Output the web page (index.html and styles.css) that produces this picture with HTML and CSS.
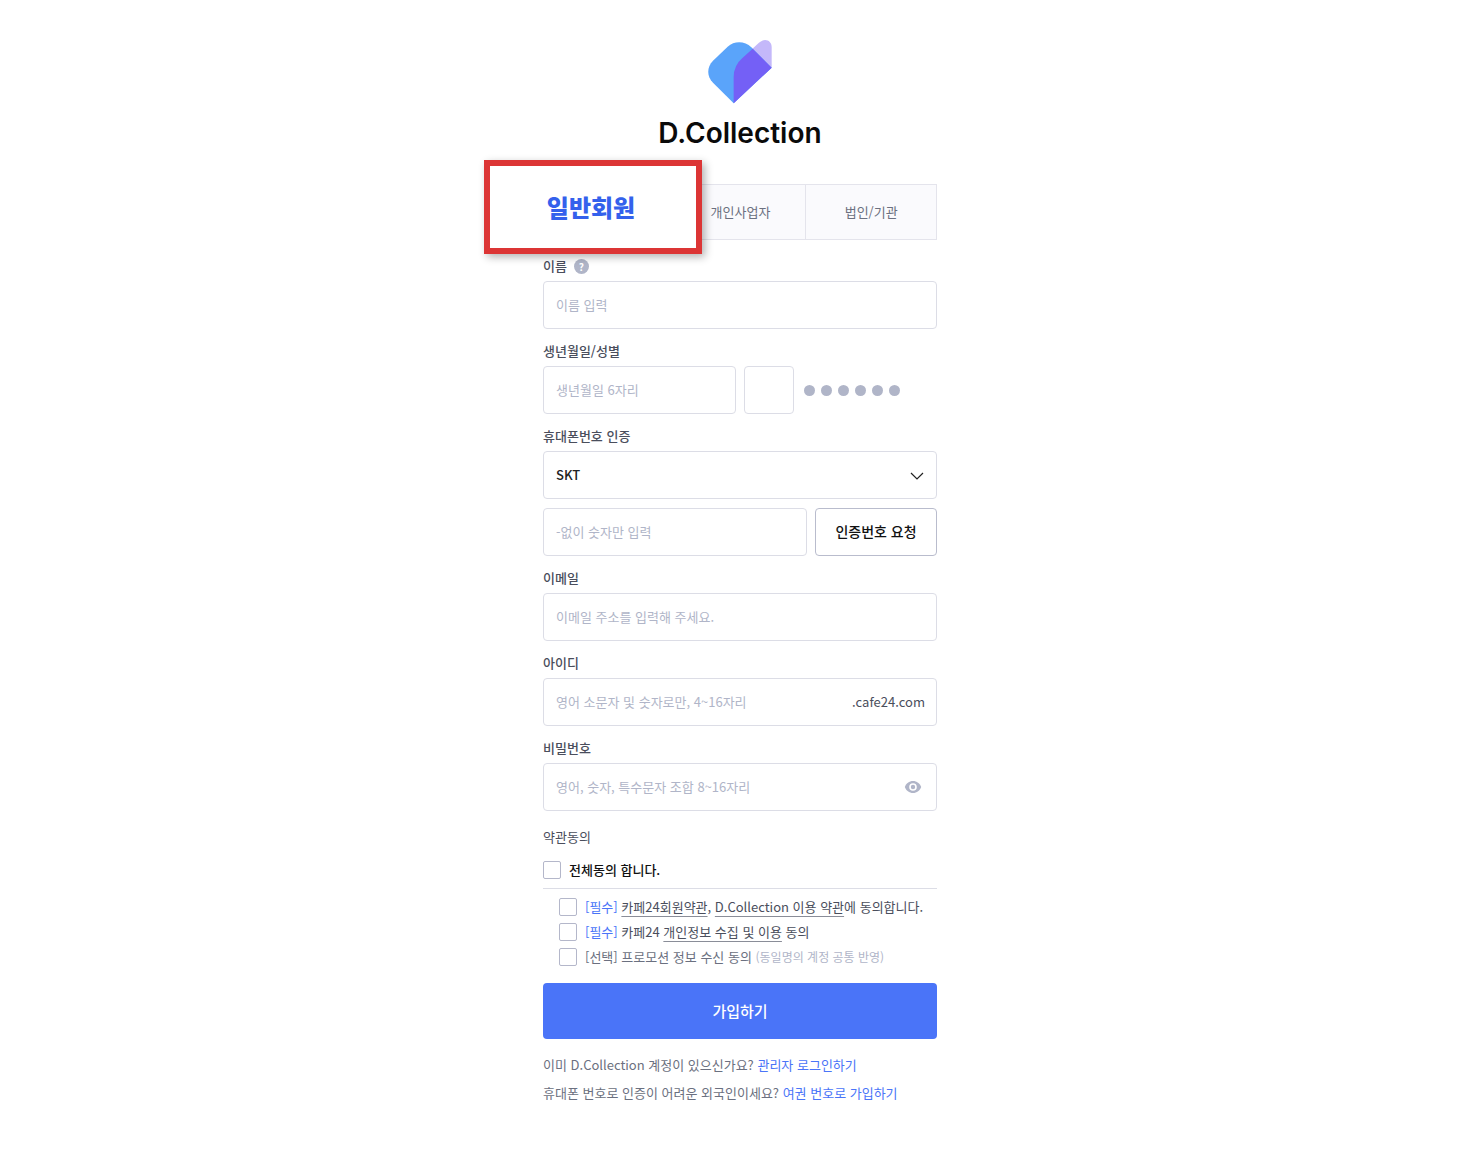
FILE: index.html
```html
<!DOCTYPE html>
<html lang="ko">
<head>
<meta charset="UTF-8">
<meta name="viewport" content="width=device-width, initial-scale=1.0">
<title>D.Collection 회원가입</title>
<link rel="stylesheet" href="styles.css">
</head>
<body>
    <main class="container">
        <h1 class="logo">
            <svg class="logo-mark" width="64" height="64" viewBox="204 29 192 192" aria-hidden="true">
                <path fill="#c4b8fa" d="M281 219V140Q281 105 308 82L356 38C374 21 395 31 395 50V112Z"/>
                <path fill="#5aa4fa" d="M281 219L219 157C200 138 200 110 219 91L263 49C283 31 314 31 334 51L395 112Z"/>
                <path fill="#7460f6" d="M281 219V140Q281 105 308 82L338 55L395 112Z"/>
            </svg>
            <span>D.Collection</span>
        </h1>

        <div class="tabs">
            <button type="button" class="tab active"><span class="callout">일반회원</span></button>
            <button type="button" class="tab">개인사업자</button>
            <button type="button" class="tab">법인/기관</button>
        </div>

        <form>
            <div class="field">
                <div class="label-row">
                    <label for="name">이름</label>
                    <button type="button" class="help" aria-label="도움말">?</button>
                </div>
                <input class="box" type="text" id="name" placeholder="이름 입력">
            </div>

            <div class="field">
                <div class="label-row"><label for="birth">생년월일/성별</label></div>
                <div class="row birth-row">
                    <input class="box birth" type="text" id="birth" placeholder="생년월일 6자리">
                    <input class="box gender" type="text" maxlength="1" aria-label="성별">
                    <div class="dots"><i></i><i></i><i></i><i></i><i></i><i></i></div>
                </div>
            </div>

            <div class="field">
                <div class="label-row"><label for="carrier">휴대폰번호 인증</label></div>
                <div class="wrap">
                    <select class="box" id="carrier">
                        <option>SKT</option>
                        <option>KT</option>
                        <option>LG U+</option>
                    </select>
                    <svg class="chevron" width="14" height="8" viewBox="0 0 14 8" aria-hidden="true">
                        <path d="M1 1L7 7L13 1" fill="none" stroke="#222" stroke-width="1.2"/>
                    </svg>
                </div>
                <div class="row phone-row">
                    <input class="box" type="tel" placeholder="-없이 숫자만 입력" aria-label="휴대폰번호">
                    <button type="button" class="request">인증번호 요청</button>
                </div>
            </div>

            <div class="field">
                <div class="label-row"><label for="email">이메일</label></div>
                <input class="box" type="email" id="email" placeholder="이메일 주소를 입력해 주세요.">
            </div>

            <div class="field">
                <div class="label-row"><label for="userId">아이디</label></div>
                <div class="wrap">
                    <input class="box" type="text" id="userId" placeholder="영어 소문자 및 숫자로만, 4~16자리">
                    <span class="suffix">.cafe24.com</span>
                </div>
            </div>

            <div class="field">
                <div class="label-row"><label for="password">비밀번호</label></div>
                <div class="wrap">
                    <input class="box" type="password" id="password" placeholder="영어, 숫자, 특수문자 조합 8~16자리">
                    <button type="button" class="eye" aria-label="비밀번호 보기">
                        <svg width="18" height="14" viewBox="0 0 18 14">
                            <path fill="#b0b5c8" d="M9 1C5.200 1 2.100 3.400 .8 7C2.100 10.600 5.200 13 9 13S15.900 10.600 17.200 7C15.900 3.400 12.800 1 9 1Z"/>
                            <circle cx="9" cy="7" r="3" fill="#b0b5c8" stroke="#fff" stroke-width="1.600"/>
                        </svg>
                    </button>
                </div>
            </div>

            <div class="terms">
                <p class="terms-title">약관동의</p>
                <div class="check all">
                    <input type="checkbox" id="agreeAll">
                    <label for="agreeAll">전체동의 합니다.</label>
                </div>
                <div class="terms-list">
                    <div class="check">
                        <input type="checkbox" id="agree1">
                        <label for="agree1"><span class="blue">[필수]</span> <a href="#">카페24회원약관</a>, <a href="#">D.Collection 이용 약관</a>에 동의합니다.</label>
                    </div>
                    <div class="check">
                        <input type="checkbox" id="agree2">
                        <label for="agree2"><span class="blue">[필수]</span> 카페24 <a href="#">개인정보 수집 및 이용</a> 동의</label>
                    </div>
                    <div class="check optional">
                        <input type="checkbox" id="agree3">
                        <label for="agree3">[선택] 프로모션 정보 수신 동의 <small>(동일명의 계정 공통 반영)</small></label>
                    </div>
                </div>
            </div>

            <button type="submit" class="submit">가입하기</button>
        </form>

        <div class="links">
            <p>이미 D.Collection 계정이 있으신가요? <a href="#">관리자 로그인하기</a></p>
            <p>휴대폰 번호로 인증이 어려운 외국인이세요? <a href="#">여권 번호로 가입하기</a></p>
        </div>
    </main>
</body>
</html>
```
FILE: styles.css
```css
* {
    box-sizing: border-box;
}

body {
    margin: 0;
    padding: 40px 16px;
    background: #fff;
    color: #4a4e5c;
    font-family: "Noto Sans CJK KR", sans-serif;
    font-size: 13px;
    line-height: 20px;
}

button, input, select {
    margin: 0;
    font: inherit;
}

p {
    margin: 0;
}

.container {
    max-width: 394px;
    margin: 0 auto;
}

.logo {
    display: flex;
    flex-direction: column;
    align-items: center;
    gap: 14px;
    margin: 0 0 35px;
    color: #0a0a0a;
    font-family: Inter, sans-serif;
    font-size: 28px;
    font-weight: 600;
    line-height: 31px;
}

.logo-mark {
    display: block;
}

/* member type tabs */
.tabs {
    display: grid;
    grid-template-columns: repeat(3, 1fr);
    height: 56px;
    border: 1px solid #e4e4ec;
}

.tab {
    position: relative;
    padding: 0;
    border: 0;
    border-left: 1px solid #e4e4ec;
    background: #fafafd;
    color: #6b7080;
}

.tab.active {
    border-left: 0;
    background: #fff;
}

/* enlarged selected tab, lies over its neighbours */
.callout {
    position: absolute;
    z-index: 1;
    top: -25px;
    left: -60px;
    display: flex;
    align-items: center;
    justify-content: center;
    width: 218px;
    height: 94px;
    padding-right: 4px;
    border: 6px solid #dc3535;
    background: #fff;
    box-shadow: 3px 3px 8px rgba(0, 0, 0, 0.3);
    color: #3461ec;
    font-size: 24px;
    font-weight: 900;
}

form {
    margin-top: 16px;
}

.field {
    margin-bottom: 12px;
}

.label-row {
    display: flex;
    align-items: center;
    gap: 7px;
    height: 20px;
    margin-bottom: 5px;
    font-weight: 500;
}

.help {
    width: 15px;
    height: 15px;
    padding: 0;
    border: 0;
    border-radius: 50%;
    background: #b0b5c8;
    color: #fff;
    font-size: 10px;
    font-weight: 700;
    line-height: 15px;
}

.box {
    display: block;
    width: 100%;
    height: 48px;
    padding: 0 12px 2px;
    border: 1px solid #dcdde6;
    border-radius: 4px;
    background: #fff;
    color: #222;
}

.box::placeholder {
    color: #b0b5c8;
    opacity: 1;
}

select.box {
    appearance: none;
    padding-bottom: 0;
    font-weight: 500;
}

.row {
    display: flex;
    gap: 8px;
}

.birth-row {
    align-items: center;
}

.birth {
    flex: 0 1 193px;
    min-width: 0;
}

.gender {
    flex: 0 0 50px;
}

.dots {
    display: flex;
    gap: 6px;
    margin-left: 2px;
}

.dots i {
    width: 11px;
    height: 11px;
    border-radius: 50%;
    background: #b0b5c8;
}

.wrap {
    position: relative;
}

.chevron {
    position: absolute;
    top: 21px;
    right: 13px;
    pointer-events: none;
}

.phone-row {
    margin-top: 9px;
}

.phone-row .box {
    flex: 1;
    min-width: 0;
}

.request {
    flex: 0 0 122px;
    padding: 0 0 2px;
    border: 1px solid #b9bccd;
    border-radius: 4px;
    background: #fff;
    color: #111;
    font-size: 14px;
    font-weight: 500;
}

.suffix {
    position: absolute;
    top: 14px;
    right: 12px;
}

.eye {
    position: absolute;
    top: 17px;
    right: 15px;
    padding: 0;
    border: 0;
    background: none;
    line-height: 0;
}

/* terms */
.terms {
    padding-top: 4px;
}

.terms-title {
    margin-bottom: 13px;
}

.check {
    display: flex;
    align-items: center;
    gap: 8px;
}

.check input {
    appearance: none;
    flex: none;
    width: 18px;
    height: 18px;
    border: 1px solid #b4b7ca;
    border-radius: 2px;
    background: #fff;
}

.check input:checked {
    background: #4a74f8;
}

.check a {
    color: inherit;
    text-decoration-color: #8a8d98;
    text-underline-offset: 4px;
}

.all {
    padding-bottom: 8px;
    border-bottom: 1px solid #dcdde6;
    color: #111;
    font-weight: 500;
}

.terms-list {
    display: grid;
    gap: 5px;
    padding: 8px 0 0 16px;
}

.optional {
    color: #6b7080;
}

.optional small {
    color: #b0b5c8;
    font-size: 12px;
}

.blue {
    color: #4a74f8;
}

.submit {
    display: block;
    width: 100%;
    height: 56px;
    margin-top: 16px;
    border: 0;
    border-radius: 4px;
    background: #4a74f8;
    color: #fff;
    font-size: 15px;
    font-weight: 500;
}

.links {
    display: grid;
    gap: 8px;
    margin-top: 16px;
    color: #6b7080;
}

.links a {
    color: #4a74f8;
    text-decoration: none;
}
```
